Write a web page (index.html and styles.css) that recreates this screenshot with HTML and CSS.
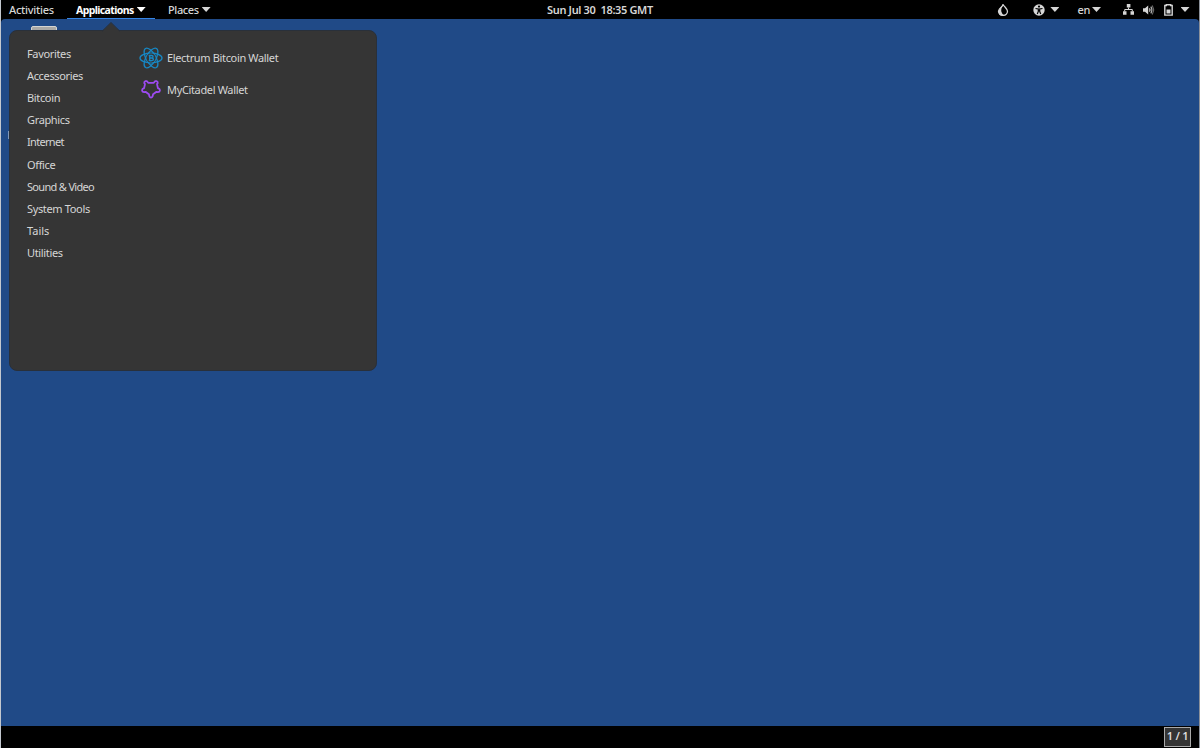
FILE: index.html
```html
<!DOCTYPE html>
<html lang="en">
<head>
<meta charset="utf-8">
<title>Desktop</title>
<link rel="stylesheet" href="styles.css">
</head>
<body>
<div class="screen">
  <header class="topbar">
    <nav class="topbar-left">
      <span class="top-item activities">Activities</span>
      <span class="top-item applications">Applications<i class="caret"></i></span>
      <span class="top-item places">Places<i class="caret"></i></span>
    </nav>
    <time class="clock">Sun Jul 30&nbsp; 18:35 GMT</time>
    <div class="tray">
      <svg class="drop" width="12" height="12" viewBox="0 0 12 12"><path d="M6 .5C6 3 1.500 4 1.500 7.300a4.500 4.100 0 0 0 9 0C10.500 5 8 3.500 6 .5Z" fill="none" stroke="#d6d6d6" stroke-width="1.300"/><path d="M6 1Q3.500 5 4.500 8T7 11.300a4.500 4 0 0 1-4.800-1L1.500 7.300Q2 4 6 1Z" fill="#d6d6d6"/></svg>
      <svg class="access" width="12" height="12" viewBox="0 0 12 12"><circle cx="6" cy="6" r="5.700" fill="#d6d6d6"/><circle cx="6" cy="2.600" r="1.100" fill="#000"/><path d="M2.500 4.500 6 5.100l3.500-.6M6 5v2.200M5.300 5v2.500L4.300 10M6.700 5v2.500l1 2.500" fill="none" stroke="#000" stroke-width="1.200"/></svg>
      <i class="caret access-caret"></i>
      <span class="lang">en</span><i class="caret lang-caret"></i>
      <svg class="network" width="11" height="11" viewBox="0 0 11 11"><path d="M3.800 0h3.600v3.600H3.800zM0 7.300h3.500v3.500H0zM7.500 7.300H11v3.500H7.500z" fill="#d6d6d6"/><path d="M5.500 3.500v2M1.700 7.500v-2h7.600v2" fill="none" stroke="#d6d6d6"/></svg>
      <svg class="volume" width="12" height="10" viewBox="0 0 12 10"><path d="M0 3.200h2L5.200.4v9.200L2 6.800H0z" fill="#d6d6d6"/><path d="M6.500 3.300q1.100 1.700 0 3.400" fill="none" stroke="#d6d6d6" stroke-width="1.200"/><path d="M7.800 1.600q2.200 3.400 0 6.800" fill="none" stroke="#b5b5b5" stroke-width="1.200"/><path d="M9.300.4q3 4.600 0 9.200" fill="none" stroke="#777"/></svg>
      <svg class="battery" width="9" height="12" viewBox="0 0 9 12"><path d="M2.300 1.200V.7h4.400v.8h1.500v9.600H.8V1.500h1.500z" fill="none" stroke="#d6d6d6" stroke-width="1.400"/><path d="M2.500 5.500h4v4h-4z" fill="#d6d6d6"/></svg>
      <i class="caret system-caret"></i>
    </div>
  </header>
  <main class="desktop">
    <span class="drive"></span>
    <span class="label-edge"></span>
    <section class="menu">
      <svg class="pointer" width="18" height="10" viewBox="0 0 18 10"><path d="M0 9.500 9 .7l9 8.800v.5H0z" fill="#353535"/><path d="M0 9.300 9 .5l9 8.800" fill="none" stroke="#29303a"/></svg>
      <ul class="categories">
        <li>Favorites</li>
        <li>Accessories</li>
        <li>Bitcoin</li>
        <li>Graphics</li>
        <li class="tight">Internet</li>
        <li>Office</li>
        <li class="tight">Sound &amp; Video</li>
        <li>System Tools</li>
        <li class="loose">Tails</li>
        <li>Utilities</li>
      </ul>
      <ul class="apps">
        <li>
          <svg width="24" height="24" viewBox="0 0 24 24" fill="none" stroke="#1788c5" stroke-width="1.300"><ellipse cx="12" cy="12" rx="4.800" ry="11" transform="rotate(30 12 12)"/><ellipse cx="12" cy="12" rx="4.800" ry="11" transform="rotate(90 12 12)"/><ellipse cx="12" cy="12" rx="4.800" ry="11" transform="rotate(150 12 12)"/><circle cx="12" cy="12" r="4.500" fill="#353535" stroke="none"/><path d="M9.700 9.500h3c1.800 0 1.800 2.500 0 2.500h-2m2 0c2.300 0 2.300 2.700 0 2.700h-3m1-5v5m1-6v.8m0 5.200v.8" stroke-width="1.300"/></svg>
          <span>Electrum Bitcoin Wallet</span>
        </li>
        <li>
          <svg width="24" height="24" viewBox="0 0 24 24"><path d="M6.200 3.200H8l1.200 1.600h5.600L16 3.200h1.800q1.300.7.900 2l-.7.900.9 4 1.600.9q.9 1.200 0 2.600l-1.700.5-1.300-.3-3.400 2.500-.5 2.100q-.6 1.200-1.600 1.200t-1.600-1.200l-.5-2.100-3.400-2.500-1.300.3-1.700-.5q-.9-1.400 0-2.600l1.600-.9.9-4-.7-.9q-.4-1.300.9-2z" fill="none" stroke="#9d4bf2" stroke-width="1.800" stroke-linejoin="round"/></svg>
          <span>MyCitadel Wallet</span>
        </li>
      </ul>
    </section>
  </main>
  <footer class="bottombar"><span class="workspace">1 / 1</span></footer>
</div>
</body>
</html>
```
FILE: styles.css
```css
* { box-sizing: border-box; }
body { margin: 0; background: #000; }
ul { list-style: none; margin: 0; padding: 0; }
svg { display: block; flex: none; }
.screen {
  width: 1200px;
  height: 748px;
  display: flex;
  flex-direction: column;
  border-left: 1px solid #c3c8cf;
  border-right: 1px solid #8b9099;
  background: #000;
  color: #d6d6d6;
  font: 11px/20px "Noto Sans", "Open Sans", sans-serif;
  white-space: nowrap;
  overflow: hidden;
}
.topbar {
  height: 19px;
  flex: none;
  display: grid;
  grid-template-columns: 1fr auto 1fr;
  font-weight: 500;
}
.topbar-left { display: flex; }
.top-item { display: flex; height: 19px; }
.activities { width: 66px; padding-left: 8px; letter-spacing: -.25px; }
.applications {
  width: 88px;
  padding-left: 9px;
  color: #fff;
  font-size: 10.5px;
  font-weight: 700;
  letter-spacing: -.6px;
  border-bottom: 1px solid #3584e4;
}
.places { padding-left: 13px; letter-spacing: -.4px; }
.caret {
  width: 9px;
  height: 5px;
  flex: none;
  margin: 7px 0 0 3px;
  background: currentColor;
  clip-path: polygon(0 0, 100% 0, 50% 100%);
}
.clock { font-weight: 600; letter-spacing: -.35px; }
.tray { display: flex; justify-content: flex-end; padding-right: 9.5px; }
.drop { margin: 4px 24px 0 0; }
.access { margin-top: 4px; }
.access-caret { margin-left: 5px; }
.lang { margin-left: 18px; letter-spacing: -.3px; }
.lang-caret { margin-left: 2px; }
.network { margin: 4px 0 0 22px; }
.volume { margin: 5px 0 0 9px; }
.battery { margin: 4px 0 0 9px; }
.system-caret { margin-left: 7.5px; }
.desktop {
  position: relative;
  flex: 1;
  background: #204a87;
  border-radius: 4px 4px 0 0;
}
.drive {
  position: absolute;
  left: 30px;
  top: 7px;
  width: 26px;
  height: 12px;
  border: 1px solid #d5d5d2;
  border-radius: 2px;
  background: #aaa9a6;
}
.label-edge {
  position: absolute;
  left: 7px;
  top: 112px;
  width: 1px;
  height: 8px;
  background: #8297b5;
}
.menu {
  position: absolute;
  left: 8px;
  top: 11px;
  width: 368px;
  height: 341px;
  display: flex;
  background: #353535;
  border: 1px solid #29303a;
  border-radius: 8px;
  letter-spacing: -.35px;
}
.pointer { position: absolute; left: 92px; top: -9px; }
.categories { width: 129px; padding: 11px 0 0 17px; }
.categories li { height: 22.120px; line-height: 23px; }
.categories .tight { letter-spacing: -.68px; }
.categories .loose { letter-spacing: 0; }
.apps { padding-top: 15px; }
.apps li { height: 32px; display: flex; gap: 4px; line-height: 24px; }
.workspace {
  width: 27px;
  height: 20px;
  border: 1px solid #aaa;
  background: #353535;
  color: #ddd;
  text-align: center;
  font-size: 11px;
  font-weight: 600;
  letter-spacing: -.2px;
  line-height: 16px;
}
.bottombar {
  height: 22px;
  flex: none;
  display: flex;
  justify-content: flex-end;
  padding: 1px 8px 0 0;
}
```
